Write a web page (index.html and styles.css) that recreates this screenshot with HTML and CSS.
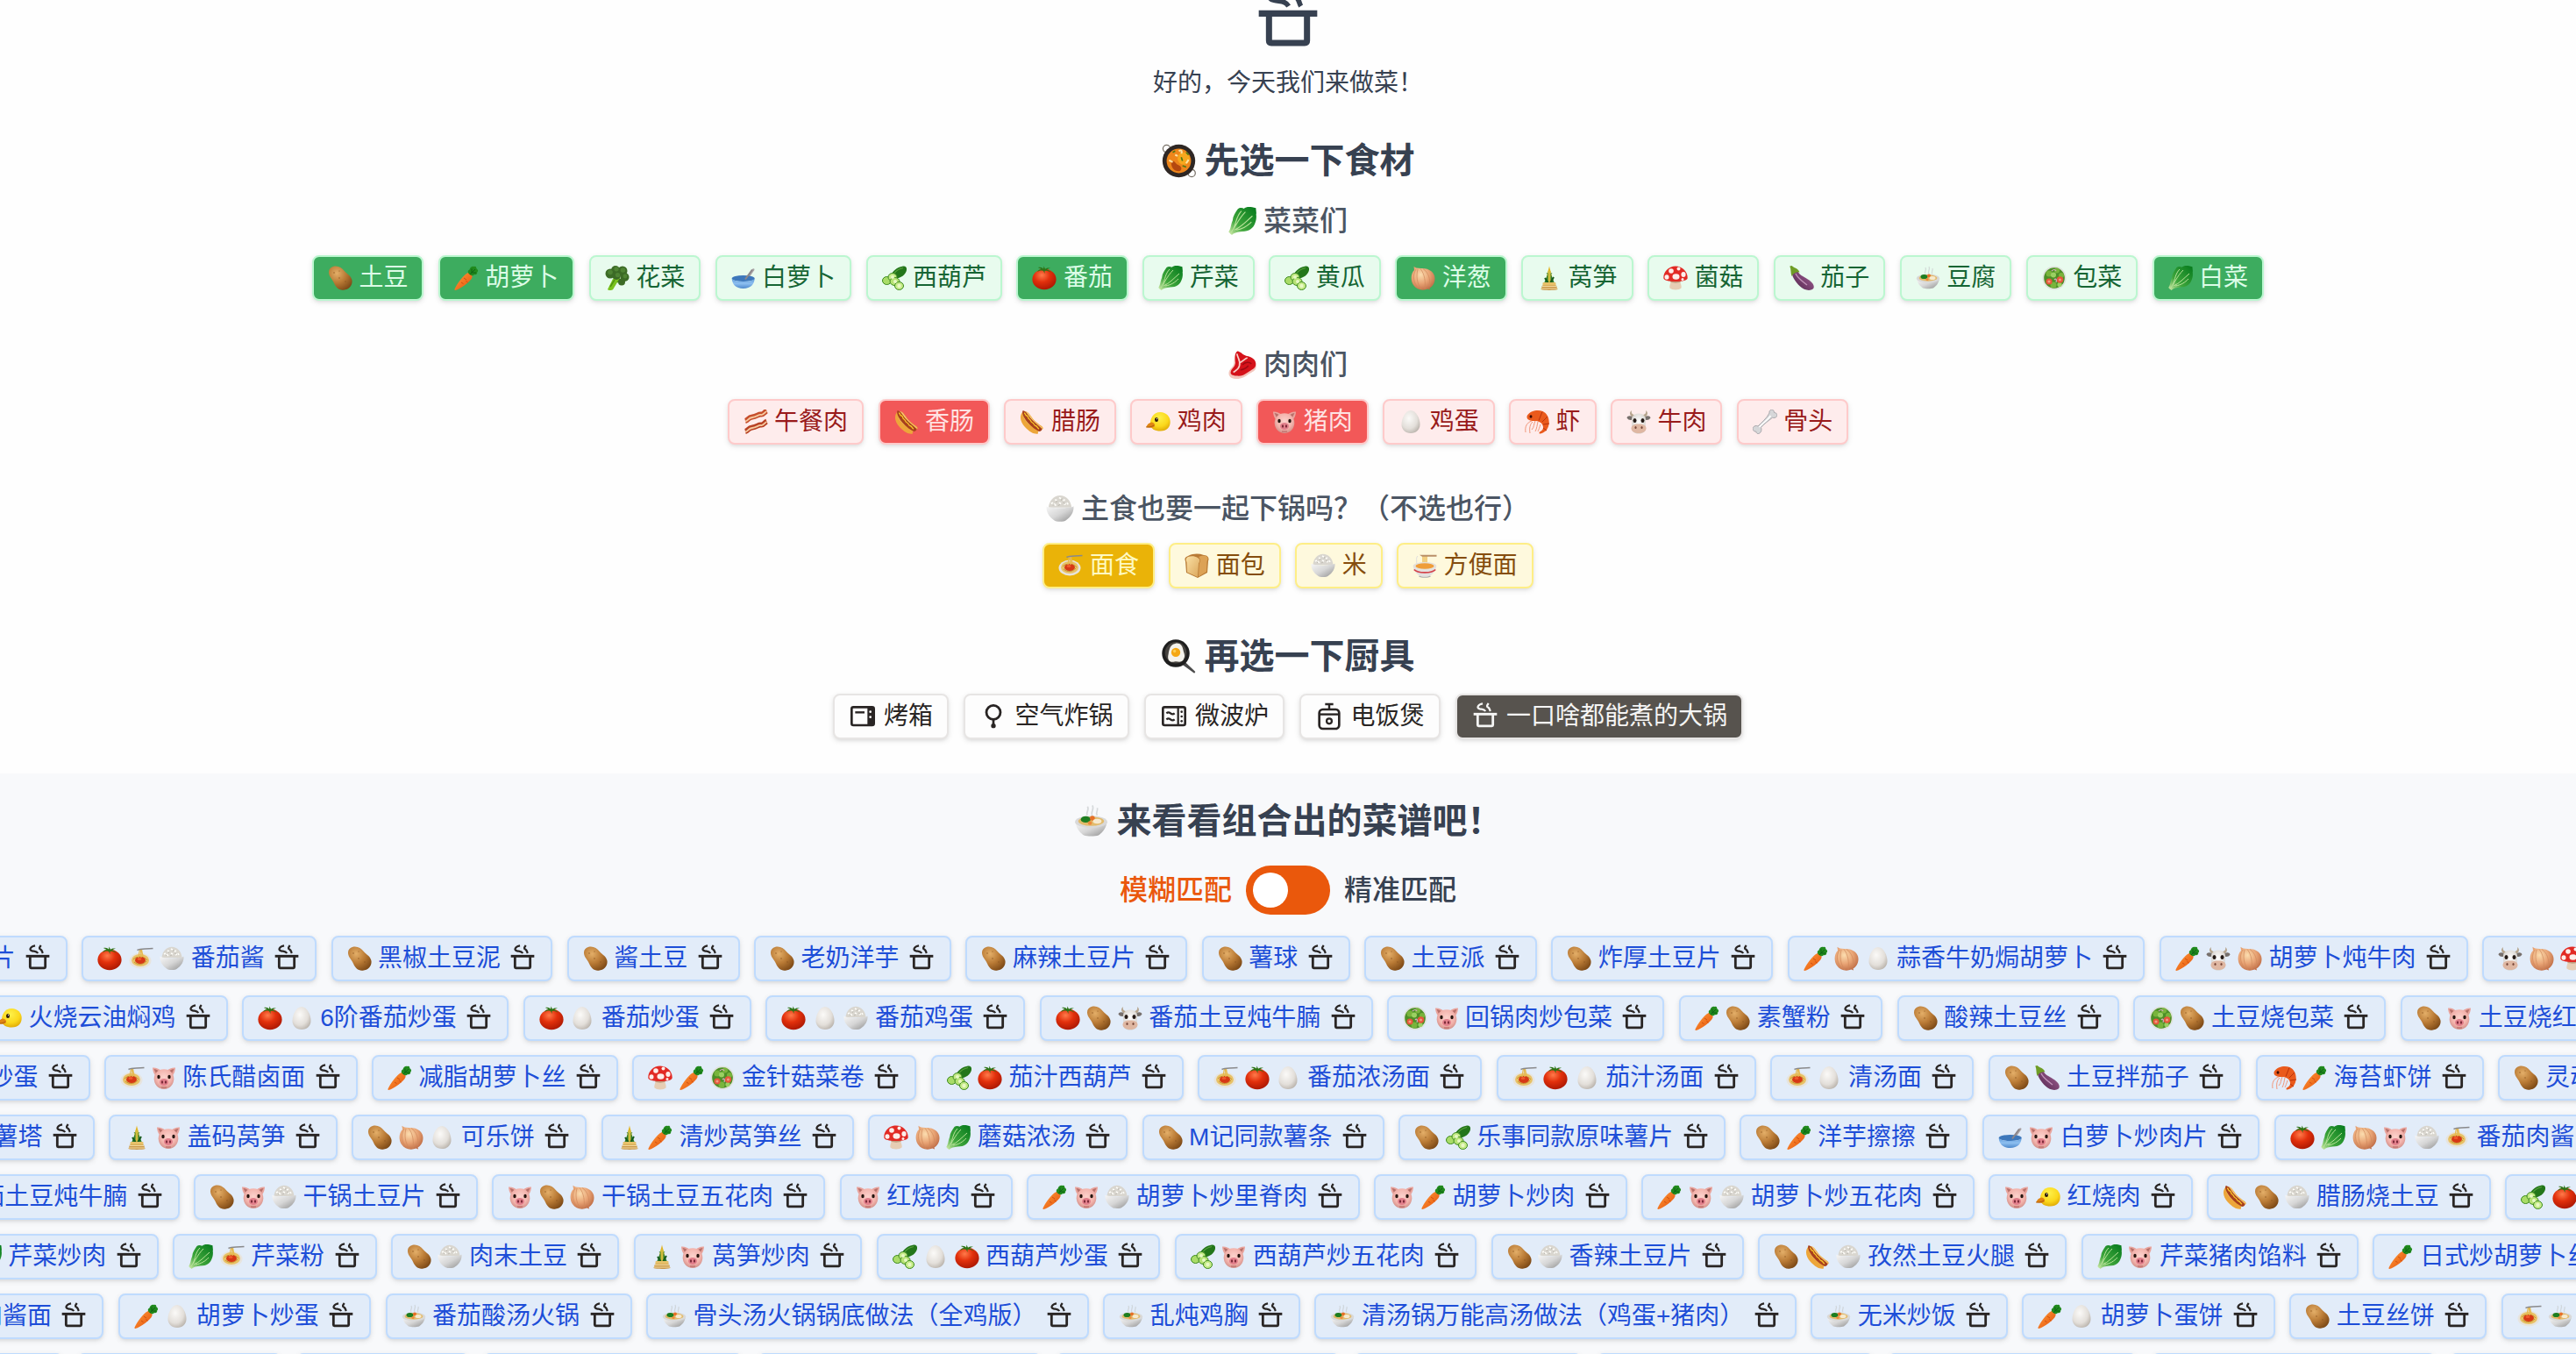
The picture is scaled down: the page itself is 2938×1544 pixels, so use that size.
FILE: index.html
```html
<!DOCTYPE html>
<html lang="zh-CN">
<head>
<meta charset="utf-8">
<title>好的，今天我们来做菜！</title>
<link rel="stylesheet" href="styles.css">
</head>
<body>
<svg class="defs" aria-hidden="true">
<defs>
<radialGradient id="gPotato" cx=".35" cy=".3" r=".8"><stop offset="0" stop-color="#e3ae68"/><stop offset=".5" stop-color="#b97a35"/><stop offset="1" stop-color="#7a4715"/></radialGradient>
<radialGradient id="gTomato" cx=".4" cy=".3" r=".75"><stop offset="0" stop-color="#ff7a4a"/><stop offset=".45" stop-color="#e2300c"/><stop offset="1" stop-color="#a81602"/></radialGradient>
<radialGradient id="gOnion" cx=".4" cy=".35" r=".75"><stop offset="0" stop-color="#fbdcae"/><stop offset=".5" stop-color="#e8a374"/><stop offset="1" stop-color="#b8643f"/></radialGradient>
<radialGradient id="gEgg" cx=".4" cy=".35" r=".75"><stop offset="0" stop-color="#fbfaf8"/><stop offset=".6" stop-color="#e3dfda"/><stop offset="1" stop-color="#b3aca4"/></radialGradient>
<radialGradient id="gPig" cx=".5" cy=".4" r=".65"><stop offset="0" stop-color="#fcd3cd"/><stop offset=".6" stop-color="#f3b3ac"/><stop offset="1" stop-color="#c98881"/></radialGradient>
<radialGradient id="gCow" cx=".5" cy=".4" r=".65"><stop offset="0" stop-color="#ffffff"/><stop offset="1" stop-color="#cfcac4"/></radialGradient>
<radialGradient id="gChick" cx=".45" cy=".3" r=".75"><stop offset="0" stop-color="#fdf04a"/><stop offset=".6" stop-color="#fbd81c"/><stop offset="1" stop-color="#dda504"/></radialGradient>
<linearGradient id="gBowl" x1="0" y1="0" x2="1" y2="1"><stop offset="0" stop-color="#f7f7f7"/><stop offset=".5" stop-color="#d6d6d6"/><stop offset="1" stop-color="#8f8f8f"/></linearGradient>
<linearGradient id="gBlue" x1="0" y1="0" x2="0" y2="1"><stop offset="0" stop-color="#5b98d8"/><stop offset=".5" stop-color="#8dbff0"/><stop offset="1" stop-color="#4c88cc"/></linearGradient>
<linearGradient id="gLeaf" x1="0" y1="1" x2="1" y2="0"><stop offset="0" stop-color="#d9efb0"/><stop offset=".35" stop-color="#3fa63c"/><stop offset="1" stop-color="#04791c"/></linearGradient>
<linearGradient id="gCarrot" x1="0" y1="0" x2="1" y2="1"><stop offset="0" stop-color="#ff9b3a"/><stop offset="1" stop-color="#e4500a"/></linearGradient>
<linearGradient id="gEgpl" x1="0" y1="1" x2="1" y2="0"><stop offset="0" stop-color="#4d2448"/><stop offset=".5" stop-color="#7d4474"/><stop offset="1" stop-color="#a9719c"/></linearGradient>
<linearGradient id="gBread" x1="0" y1="0" x2="1" y2="1"><stop offset="0" stop-color="#fae0a4"/><stop offset="1" stop-color="#dba65a"/></linearGradient>
<symbol id="potato" viewBox="0 0 28 28"><path d="M6.500 .8C1.500 1.800-.2 6.600 1.800 11.200c1.700 3.600 3.600 4.600 5.400 9.100 1.800 4.300 5.300 8 10.600 7.400 6.600-.7 10.400-5.600 9.700-11C26.900 12 22.500 9.800 18.800 5.900 15.600 2.500 12-.3 6.500.8z" fill="url(#gPotato)"/><g fill="#8d5620"><circle cx="7" cy="8" r=".7"/><circle cx="13" cy="14" r=".7"/><circle cx="20" cy="18" r=".7"/><circle cx="13" cy="6" r=".6"/></g></symbol>
<symbol id="carrot" viewBox="0 0 28 28"><path d="M15 8.500c2.600-1.500 6.400 1.500 5.400 4.900C18.700 18 7 26.500 1.300 28c-.9.100-1-.7-.7-1.400C3 20.500 11 10.500 15 8.500z" fill="url(#gCarrot)"/><path d="M11 14l3 2M8 19l2.500 1.600M15.500 19l-2-1.500" stroke="#c4440a" stroke-width=".8"/><path d="M17 9.500c-2.500-3-.5-4.500.5-5 .5-3 3.500-4.500 5-3.500 2-.5 3 .5 2.700 2 2.300 1.500 2.500 3.500 1 4.500.3 2.500-1.700 3-3.200 2.500-1.500 2-3.500 1.500-6-.5z" fill="#208a1d"/><path d="M18 10l6-6M20 8V3.500M20.500 8H25" stroke="#0d5e14" stroke-width=".9"/></symbol>
<symbol id="broccoli" viewBox="0 0 28 28"><path d="M9 15L3 27c1 1.500 5 1 6 .2L14 19l4-2-2-5z" fill="#79c21d"/><path d="M6 24l5-8M14 19l5-4" stroke="#4f9410" stroke-width="1.500"/><g fill="#3c6b26"><circle cx="6" cy="9" r="5.500"/><circle cx="12" cy="5" r="5"/><circle cx="20" cy="6" r="5.500"/><circle cx="22.500" cy="13" r="5"/><circle cx="19" cy="18.500" r="4"/><circle cx="13" cy="11" r="5"/></g><g fill="#4f8434"><circle cx="6" cy="7.500" r="2.800"/><circle cx="13" cy="3.800" r="2.600"/><circle cx="20.500" cy="5" r="2.800"/><circle cx="23" cy="12" r="2.400"/><circle cx="14.500" cy="10.500" r="2.600"/></g></symbol>
<symbol id="bowl" viewBox="0 0 28 28"><path d="M24.500 3.500c1.600-.7 2.500.6 1.700 1.700L18 17l-3-1z" fill="#aaa4a6"/><ellipse cx="13.700" cy="14.500" rx="13" ry="3.600" fill="#3d77bb"/><path d="M.7 14.500C1 21 5 26 13.700 26s12.700-5 13-11.500c-1.500 4.800-24.500 4.800-26 0z" fill="url(#gBlue)"/><path d="M24 4.500L16 15.500" stroke="#8c868a" stroke-width="2"/></symbol>
<symbol id="cucumber" viewBox="0 0 28 28"><path d="M24 .5c3-.6 4.500 1.500 4 4.500-.7 5-7 9.500-12.500 9.500-4.200 0-5.500-3-4-6C13.500 4.500 19 1.200 24 .5z" fill="#23761a"/><path d="M24 2.500c-4 1-8 3-10 6" stroke="#59a13c" stroke-width="1.200" fill="none"/><g stroke="#3c8a1f" stroke-width="1"><ellipse cx="5.500" cy="17" rx="5" ry="4.500" fill="#a9dc68"/><ellipse cx="12" cy="13" rx="5" ry="4.500" fill="#c4ea86"/><ellipse cx="14.500" cy="18" rx="5.500" ry="4.500" fill="#b6e274"/><ellipse cx="19.500" cy="23" rx="5" ry="4.500" fill="#c4ea86"/></g><g fill="#e8f8c4"><circle cx="12" cy="13" r="2"/><circle cx="15" cy="18" r="2"/><circle cx="19.500" cy="23" r="2.200"/></g></symbol>
<symbol id="tomato" viewBox="0 0 28 28"><ellipse cx="14" cy="15.500" rx="13.600" ry="11.700" fill="url(#gTomato)"/><path d="M13 6c-3-1-5 0-7 1 1-2 3-3 4.500-3C9 3 8 2.500 7 2c3-.8 5 .4 6 1.500L13.500.5 15 3.800c2-1.600 4-1.500 6-1-2 .4-3 1-4 2 2 .2 3.500 1.200 4.500 3C19 6 16 5.500 14.500 6v3z" fill="#2d7516"/></symbol>
<symbol id="leafy" viewBox="0 0 28 28"><path d="M9.500 2c2-1.800 4.500-1 6-.3C18-.5 22-.3 27.500 1.200c-.2 2 .8 4 .2 6.300.5 3 0 6-1 8.500-1.500 5-6 8.500-13 8.500C9 25 6 25.500 3.500 28L.2 25c2.500-3.500 2-7 4-11.500C4.500 9 7 5.500 9.500 2z" fill="url(#gLeaf)"/><path d="M2 26.500C7 20 10 12 17 5M5 22C8 15 8 9 13 4M6 23c7-3 11-8 18-14M8 23c7-1 11-4 15-8" stroke="#b9e39a" stroke-width="1" fill="none"/></symbol>
<symbol id="onion" viewBox="0 0 28 28"><path d="M3.500.8c1.600 1.700 4 2.200 8 2.200C21 2.500 27.500 7.500 27.500 14.500c0 5.500-2.500 9-6 11l.5 2-2.500-1c-6 2.500-13 .8-16.500-4.500-3.600-5.500-3-13 1-17z" fill="url(#gOnion)"/><path d="M6 4C1 12 4 20 8 25M8 4c-2 8-1 16 4 23M11 3.500c5 6 6 15 5 23M14 3.500c6 4 9 12 7 20" stroke="#d08a5c" stroke-width=".7" fill="none"/></symbol>
<symbol id="pine" viewBox="0 0 28 28"><path d="M11 12l3-11.500L17 12l1 9h-8z" fill="#e2b526"/><path d="M10.500 8l1.500 2-4 10h12l-4-10 1.500-2-3 1z" fill="#2b7a2a"/><path d="M12.500 6h3v13h-3z" fill="#d0bc3c"/><path d="M9 14l4 6M19 13l-4 7" stroke="#175b1e" stroke-width="2"/><rect x="6.500" y="19" width="15" height="4" rx="1" fill="#e7c069"/><path d="M6 22.500h16l1.500 4.500c-3 1.200-16 1.200-19 0z" fill="#c9974a"/><path d="M6 23.500h16M5 26h18" stroke="#f4dca0" stroke-width="1"/></symbol>
<symbol id="mushroom" viewBox="0 0 28 28"><path d="M9 14h10c-.5 5 2.500 8.500 1.500 11.500-2.500 2.500-10.500 2.500-13 0C6.500 22.500 9.500 19 9 14z" fill="#e6cdb4"/><path d="M8.500 16h11l.3 2.500c-3 1.500-8.500 1.500-11.600 0z" fill="#bd9c7e"/><path d="M14 .5C22 .5 28 7 27.700 14c0 2.800-6 4-13.700 4S.3 16.800.3 14C0 7 6 .5 14 .5z" fill="#e22a24"/><g fill="#fdeeea"><circle cx="9" cy="6" r="2.800"/><circle cx="17.500" cy="3.500" r="2"/><ellipse cx="14.500" cy="12.500" rx="4" ry="3.300"/><ellipse cx="4" cy="13" rx="2.500" ry="2.800"/><ellipse cx="23" cy="10" rx="2.600" ry="3"/><circle cx="22" cy="15.500" r="1.500"/></g></symbol>
<symbol id="eggplant" viewBox="0 0 28 28"><path d="M2.500 2C6 5 9 4.500 10.500 8c2 3.500 6.500 4.500 12 8.500 4.500 3.500 6.500 7 4.500 9.800-4 3.300-11 1.200-15-2.800C5.500 17.500 1 10 2.500 2z" fill="url(#gEgpl)"/><path d="M7 9c2 5 7 8 13 13" stroke="#c193b8" stroke-width="1.400" fill="none"/><path d="M.3.5L2.600 0c2 2.500 7 2.500 8.900 7.500-2-.5-3-.5-4 .2C6 8 4 9 2.500 12 1 8 2 4 .3.500z" fill="#6f9d26"/></symbol>
<symbol id="stew" viewBox="0 0 28 28"><path d="M11 9c-2-2 2-4 0-7M15 9c-2-2 2-5 0-8M19 9c-2-2 1-3 0-6" stroke="#c8cccd" stroke-width="1.200" fill="none" opacity=".7"/><path d="M1 14.500C2 21 6 24 8 25.500c3 1 9 1 12 0 2-1.500 6-4.500 7-11z" fill="url(#gBowl)"/><ellipse cx="14" cy="14.500" rx="13.200" ry="5" fill="#d9d9d9"/><ellipse cx="14" cy="14" rx="10.500" ry="3.700" fill="#e3bb6b"/><ellipse cx="9.500" cy="12.500" rx="4" ry="2.600" fill="#1d7e21"/><circle cx="15" cy="11.500" r="2" fill="#e66f26"/><ellipse cx="19" cy="14" rx="3.500" ry="2" fill="#f6ead0"/><circle cx="13" cy="15.500" r="1.600" fill="#ed8a3d"/></symbol>
<symbol id="salad" viewBox="0 0 28 28"><circle cx="14" cy="14" r="13.500" fill="#dfe2dc"/><circle cx="14" cy="14" r="11.800" fill="#4c8f27"/><g fill="#79b43c"><circle cx="8" cy="9" r="3.500"/><circle cx="17" cy="5.500" r="3"/><circle cx="22" cy="11" r="3"/><circle cx="13" cy="22" r="3.500"/></g><g fill="#9bd062"><circle cx="13" cy="10.500" r="3"/><circle cx="20" cy="21.500" r="2.600"/></g><g fill="#e5573b"><circle cx="8" cy="18" r="3.600"/><circle cx="20.500" cy="16" r="3.700"/></g><g fill="#f29a83"><circle cx="8" cy="18" r="1.600"/><circle cx="20.500" cy="16" r="1.600"/></g><path d="M11 6c2-2 4-2 5 0M14 16c2-2 3 0 2 3" stroke="#d7a6c4" stroke-width="1.200" fill="none"/></symbol>
<symbol id="steak" viewBox="0 0 28 28"><path d="M9 .5c3.500.5 5 3.500 8.500 4.500 6 1 10.500 4 10.300 10-.2 5.500-4 5.500-7.800 8.500-4 3-8 5-13 4.500-5-.5-7-3-6.500-6.500.8-4 4.500-5 5-9C6 8.500 6 2 9 .5z" fill="#f3c5bc"/><path d="M9 .5c3.500.5 5 3.500 8.500 4.500 6 1 10.500 4 9.800 9-.3 4-4 4.500-7.800 7.500-4 3-7 4-11.500 3.500-4-.5-6.500-1.500-5.500-4.500.8-3 4-4 4.500-8.500C6.500 8.500 6 2 9 .5z" fill="#d5121a"/><path d="M8.500 3c1 5 4 7 2.500 12-1 4-4 5-6 6.500M11 12c3-1 5-4 8-5" stroke="#f7cfc8" stroke-width="1.500" fill="none"/><path d="M14 14c3-3 7-3 9-1M12 19c3 0 6-2 8-4" stroke="#9e0a12" stroke-width="1.300" fill="none"/></symbol>
<symbol id="bacon" viewBox="0 0 28 28"><g fill="none"><path d="M2 13c4-1 3-4 8-4.500S17 5 20 5.500s4-3 6.500-4" stroke="#c64e2c" stroke-width="6"/><path d="M2 13.500c4-1 3-4 8-4.500s7-3.500 10-3 4-3 6.500-4" stroke="#f6c9a0" stroke-width="1.800"/><path d="M2 25c4-1 3-4 8-4.500s7-3.500 10-3 4-3 6.500-4" stroke="#b74225" stroke-width="6"/><path d="M2 25.500c4-1 3-4 8-4.500s7-3.500 10-3 4-3 6.500-4" stroke="#f6c9a0" stroke-width="1.800"/></g></symbol>
<symbol id="hotdog" viewBox="0 0 28 28"><path d="M3 3C-.5 8 .5 14 6 20s11 8.500 15 7.500c-1-3 3-4 5.500-5.500C28 19 20 17 15 10.500 11 5 8 0 3 3z" fill="#eda63a"/><path d="M4 3c4-2.500 6 1 9 5.500 4 6 10 9.500 13 12.500l-3 3C17 22 10 17 7 13 4.500 9.500 3 6 4 3z" fill="#f7cb72"/><path d="M3.500 1.200C6 .5 9 5 12 9.500c4 5 10 9 13.500 12.500-.3 2.300-1.800 3-3 3C17 23 11 17 8 13.500 5 9.500 2 4 3.500 1.200z" fill="#a8401c"/><path d="M5 4c2 0 1 3 3 3s1 3 3 4 1 3 3.500 4 1 3 3.500 3.500 2 3 4 3.500" stroke="#f9c82a" stroke-width="1.300" fill="none"/></symbol>
<symbol id="chick" viewBox="0 0 28 28"><path d="M16.500 3C23 3 27.800 8 27.700 14S24 24.500 16.500 24.500C10 24.500 5.500 22 5 17c-.5-6 3-14 11.500-14z" fill="url(#gChick)"/><path d="M6.500 14.500c-3 .5-5 2.500-6.300 5.500 2.800.5 7 1.500 9.300-.5 1.500-2 0-4.500-3-5z" fill="#e08512"/><path d="M.2 20c3 .2 6 0 9-2" stroke="#a8590a" stroke-width=".9" fill="none"/><ellipse cx="12" cy="11.500" rx="2" ry="2.500" fill="#2a1708"/><circle cx="12.500" cy="10.700" r=".6" fill="#fff"/></symbol>
<symbol id="pig" viewBox="0 0 28 28"><path d="M1 2.500c3-.5 7.500 1 9.500 3.500L4 11C2 9 1 5 1 2.500zM27 2.500C24 2 19.500 3.500 17.500 6l6.500 5c2-2 3-6 3-8.500z" fill="#e9a49d"/><path d="M2.500 4c2 0 4 1 5.500 2.500L5 9zM25.500 4c-2 0-4 1-5.500 2.500L23 9z" fill="#b8706a"/><path d="M14 4.300c7 0 11.300 4.700 11.300 11S20.500 27 14 27 2.700 21.600 2.700 15.300s4.300-11 11.300-11z" fill="url(#gPig)"/><ellipse cx="14" cy="19" rx="5" ry="4" fill="#e27f8b"/><ellipse cx="12" cy="19" rx="1.100" ry="1.700" fill="#7c2b38"/><ellipse cx="16" cy="19" rx="1.100" ry="1.700" fill="#7c2b38"/><ellipse cx="8" cy="13" rx="1.700" ry="2.200" fill="#25150f"/><ellipse cx="20" cy="13" rx="1.700" ry="2.200" fill="#25150f"/><path d="M11 25h6" stroke="#b4615f" stroke-width="1"/></symbol>
<symbol id="egg" viewBox="0 0 28 28"><path d="M14 1c6 0 10.500 9 10.500 16 0 6-4.500 10-10.500 10S3.500 23 3.500 17C3.500 10 8 1 14 1z" fill="url(#gEgg)"/></symbol>
<symbol id="shrimp" viewBox="0 0 28 28"><path d="M3 6.500C7 1 15 0 20.500 2 26 4.500 28.500 11 27.500 17s-5 9.500-9.500 10.500c-2 .3-2-1.800 0-2.500 3-1.500 4-5 2-8-2-3.500-6-4-10-4-5 0-9-2.500-7-6.500z" fill="#ea5a1c"/><path d="M20 2.500l-4 10M26 8l-6 6M28 16l-7 1M25 24l-4-3" stroke="#b8320b" stroke-width="1" fill="none"/><ellipse cx="7" cy="8" rx="1.500" ry="1.700" fill="#3b0c04"/><path d="M8 13C2 15 0 20 1 26M9 14c-3 3-4 7-3 13M12 13c-2 4-1 7-4 10M15 14c-1 4-1 7-3 11M18 17c-1 3-2 6-3 8" stroke="#f19679" stroke-width="1" fill="none"/></symbol>
<symbol id="cow" viewBox="0 0 28 28"><path d="M6 1C5 4 7 6 10 6l-2 3C4 8 2.500 3 6 1zM22 1c1 3-1 5-4 5l2 3c4-1 5.500-6 2-8z" fill="#b6a58e"/><path d="M6.500 8C4 6.500 1 7 .5 9.500 2 12 5 12.500 7 11.500zM21.500 8c2.500-1.500 5.500-1 6 1.500-1.500 2.500-4.500 3-6.500 2z" fill="#77706c"/><path d="M14 4.500c6 0 8.500 4 8 9-.5 4 0 6 0 8 0 4-4 6-8 6s-8-2-8-6c0-2 .5-4 0-8-.5-5 2-9 8-9z" fill="url(#gCow)"/><path d="M14 16.500c5.500 0 8.500 2 8.500 5s-3.500 5.500-8.500 5.500-8.500-2.500-8.500-5.500 3-5 8.500-5z" fill="#dfb7a2"/><ellipse cx="9.500" cy="12.500" rx="2" ry="2.500" fill="#241a16"/><ellipse cx="18.500" cy="12.500" rx="2" ry="2.500" fill="#241a16"/><ellipse cx="10.500" cy="20.500" rx="1.100" ry="1.500" fill="#7b4a3c"/><ellipse cx="17.500" cy="20.500" rx="1.100" ry="1.500" fill="#7b4a3c"/></symbol>
<symbol id="bone" viewBox="0 0 28 28"><path d="M19 4c-.5-3 2-4.500 4-3.500 1.500.8 1.500 2.500 1.500 3 2.500 0 4 2 3 4.200-1 2-3.500 2-5 1.500C18 13 12 17 9.500 20.500c.5 1.500 1 4-1 6C6.500 28.500 4 27.500 3.800 25c-2.500.5-4.300-2-3.300-4.500 1-2 3.500-2.500 5.500-1.500C10 15 16 10 19 4z" fill="#d6d7d9" stroke="#9a9b9f" stroke-width=".8"/><path d="M20.500 7C17 12 11 16 7.500 20" stroke="#fff" stroke-width="1.500" fill="none"/></symbol>
<symbol id="rice" viewBox="0 0 28 28"><path d="M2.500 13C3 6 8 .8 14 .8S25 6 25.500 13z" fill="#d9d6cf"/><path d="M5 9l2-1M9 5l2 1M13 3l2 1M17 6l2-1M21 8l1 2M8 9l2 2M13 8l2 1M18 10l2-1" stroke="#fffefa" stroke-width="1.500"/><path d="M10 8l1-2M15 6l1-2M19 9l-2-1M7 11l1-1M12 11l2-1" stroke="#b8b4ab" stroke-width=".8"/><path d="M.5 11.500c2 2.500 25 2.500 27 0 .5 6-3 11-7.500 14-2 2-10 2-12 0-4.500-3-8-8-7.500-14z" fill="url(#gBowl)"/></symbol>
<symbol id="pasta" viewBox="0 0 28 28"><ellipse cx="13" cy="16.500" rx="12.500" ry="9" fill="#e7e4de"/><ellipse cx="13" cy="16" rx="10" ry="7" fill="#e8c267"/><path d="M5 15c4-4 12-4 16 1M6 18c5 4 10 3 14-1M8 13c3 0 6-1 9 1" stroke="#c18e2c" stroke-width=".9" fill="none"/><ellipse cx="13" cy="16" rx="6" ry="4" fill="#d63815"/><ellipse cx="12" cy="14.500" rx="2.500" ry="1.500" fill="#f05a2c"/><path d="M11 13L12.500 3M14 13L13.500 3M16 12L14.500 4" stroke="#e5b94e" stroke-width="1.300"/><path d="M9.500 4.500c4-2 8-1 18-2" stroke="#89898b" stroke-width="1.500" fill="none"/></symbol>
<symbol id="bread" viewBox="0 0 28 28"><path d="M4 3c6-3 12-3 18-1 6 .5 6 4.500 5 7l-1 13-11 6L2 22 1 9C-.5 6 1 4 4 3z" fill="#b87a35"/><path d="M4 4c3-1 8-1 11 1 3 1.500 2.500 4.500 1 6.500L15 27 3 21.500 2.500 10C1 7 2 5 4 4z" fill="url(#gBread)"/><path d="M16 4c4-1.500 10-2 10.500 1.500 0 2-1 3-1 4.500L25 21l-9 5.500.7-14.500C18.500 9 18 5.500 16 4z" fill="#dca255"/></symbol>
<symbol id="ramen" viewBox="0 0 28 28"><path d="M12 13V2.500M14 13V2M16 13V2" stroke="#edbd58" stroke-width="1.400"/><path d="M8 1.800h19.500v2H11z" fill="#b98f68"/><path d="M6 3c-3 3 0 6-2 10" stroke="#ddd" stroke-width="1" fill="none"/><ellipse cx="14" cy="14.500" rx="13.300" ry="4.600" fill="#e5e0d9"/><ellipse cx="14" cy="14.500" rx="10.500" ry="3.200" fill="#ef9d38"/><path d="M.8 15c1 5.500 4 8.500 7.200 10.500 2.500 1.800 9.500 1.800 12 0C23.200 23.500 26.200 20.500 27.200 15c-3 5.500-23.400 5.500-26.400 0z" fill="#e3e1e0"/><path d="M1.800 18.500c4 4.500 20.400 4.500 24.400 0" stroke="#d4434a" stroke-width="1.800" fill="none"/><path d="M8 25.500c2.500 1.800 9.500 1.800 12 0l1 .8c-3 2-11 2-14 0z" fill="#aaa"/></symbol>
<symbol id="paella" viewBox="0 0 28 28"><circle cx="4" cy="4" r="3" fill="none" stroke="#777067" stroke-width=".9"/><circle cx="24.500" cy="24" r="3" fill="none" stroke="#777067" stroke-width=".9"/><circle cx="14" cy="14" r="13.400" fill="#2e2724"/><circle cx="14" cy="14" r="10" fill="#ee861b"/><circle cx="18" cy="12" r="5" fill="#f7a81e"/><path d="M8 14c-1 5 2 8.500 6 8.500 2.500-.5 3-3.500 0-5-3-1-3-4-6-3.500z" fill="#b4480f"/><path d="M6 13.500l3 1.500M14 6c2-1.500 3 0 2 2M20 16l2-3M11 9l2 1" stroke="#fbe4a6" stroke-width="1.500" fill="none"/><path d="M16 11l1 3M20 7l2 2M11 6l-2 1M17 18l3 1" stroke="#4b7a14" stroke-width="1.200"/></symbol>
<symbol id="frypan" viewBox="0 0 28 28"><path d="M19 18.500l8.500 8-.8 1.300-9.700-7z" fill="#4a4a4a"/><circle cx="11.500" cy="11.500" r="11.300" fill="#1e1e1e"/><circle cx="11.500" cy="11" r="8.800" fill="#46433f"/><path d="M11 3.500c4-1 6 2 6.500 5 .5 3 2.500 5 0 8.500-3 3-5 0-8 1.500-4 .5-5-3-4-6.500C6 8.500 7 4 11 3.500z" fill="#f4f2ec"/><circle cx="11.500" cy="10.700" r="3.700" fill="#f5a713"/><circle cx="10.500" cy="9.700" r="1.200" fill="#fccf56"/></symbol>
<symbol id="pot" viewBox="0 0 24 24"><path d="M2 10h20" stroke="currentColor" stroke-width="2.200"/><path d="M5.500 10v9.300q0 .8.8.8h11.400q.8 0 .8-.8V10" fill="none" stroke="currentColor" stroke-width="2.100"/><path d="M9.800 1C6 1.600 4 4.800 7.200 5.500 9.500 6 11 5.600 12.200 7.500M14.800.8C13.300 2.700 13 3.500 14.400 4.200 15.900 4.900 15.600 6.200 16.400 7.500" fill="none" stroke="currentColor" stroke-width="1.700"/></symbol>
<symbol id="oven" viewBox="0 0 24 24"><rect x="2.500" y="4" width="19" height="15.500" rx="1.500" fill="none" stroke="currentColor" stroke-width="2"/><path d="M16 4h5v16h-5z" fill="currentColor"/><path d="M5.500 8.500h8" stroke="currentColor" stroke-width="1.800"/><circle cx="18.500" cy="8" r="1" fill="#fdfdfd"/><circle cx="18.500" cy="12.500" r="1" fill="#fdfdfd"/></symbol>
<symbol id="fryer" viewBox="0 0 24 24"><circle cx="12" cy="8.500" r="6" fill="none" stroke="currentColor" stroke-width="2.100"/><path d="M12 14.500V20" stroke="currentColor" stroke-width="2"/><circle cx="12" cy="20" r="2" fill="currentColor"/></symbol>
<symbol id="micro" viewBox="0 0 24 24"><rect x="2.500" y="4" width="19" height="15.500" rx="1.500" fill="none" stroke="currentColor" stroke-width="2"/><path d="M15.500 4v16" stroke="currentColor" stroke-width="1.700"/><path d="M5.500 9.300q1.700-1.500 3.500 0t3.500 0M5.500 14.500q1.700-1.500 3.500 0t3.500 0" fill="none" stroke="currentColor" stroke-width="1.700"/><circle cx="18.500" cy="8" r="1" fill="currentColor"/><circle cx="18.500" cy="12" r="1" fill="currentColor"/><circle cx="18.500" cy="16" r="1" fill="currentColor"/></symbol>
<symbol id="cooker" viewBox="0 0 24 24"><path d="M8.500 1.500h7M12 1.500V5.500" stroke="currentColor" stroke-width="1.800"/><rect x="3.500" y="6" width="17" height="16.500" rx="3" fill="none" stroke="currentColor" stroke-width="2"/><path d="M3.500 10.200h17" stroke="currentColor" stroke-width="1.800"/><circle cx="12" cy="16" r="2.200" fill="none" stroke="currentColor" stroke-width="1.700"/></symbol>
</defs>
</svg>

<main class="picker">
  <svg class="logo"><use href="#pot"/></svg>
  <p class="tagline">好的，今天我们来做菜！</p>

  <h2 class="title first"><svg><use href="#paella"/></svg>先选一下食材</h2>

  <h3 class="group top"><svg><use href="#leafy"/></svg>菜菜们</h3>
  <div class="chips green">
    <button class="chip on"><svg><use href="#potato"/></svg>土豆</button>
    <button class="chip on"><svg><use href="#carrot"/></svg>胡萝卜</button>
    <button class="chip"><svg><use href="#broccoli"/></svg>花菜</button>
    <button class="chip"><svg><use href="#bowl"/></svg>白萝卜</button>
    <button class="chip"><svg><use href="#cucumber"/></svg>西葫芦</button>
    <button class="chip on"><svg><use href="#tomato"/></svg>番茄</button>
    <button class="chip"><svg><use href="#leafy"/></svg>芹菜</button>
    <button class="chip"><svg><use href="#cucumber"/></svg>黄瓜</button>
    <button class="chip on"><svg><use href="#onion"/></svg>洋葱</button>
    <button class="chip"><svg><use href="#pine"/></svg>莴笋</button>
    <button class="chip"><svg><use href="#mushroom"/></svg>菌菇</button>
    <button class="chip"><svg><use href="#eggplant"/></svg>茄子</button>
    <button class="chip"><svg><use href="#stew"/></svg>豆腐</button>
    <button class="chip"><svg><use href="#salad"/></svg>包菜</button>
    <button class="chip on"><svg><use href="#leafy"/></svg>白菜</button>
  </div>

  <h3 class="group"><svg><use href="#steak"/></svg>肉肉们</h3>
  <div class="chips red">
    <button class="chip"><svg><use href="#bacon"/></svg>午餐肉</button>
    <button class="chip on"><svg><use href="#hotdog"/></svg>香肠</button>
    <button class="chip"><svg><use href="#hotdog"/></svg>腊肠</button>
    <button class="chip"><svg><use href="#chick"/></svg>鸡肉</button>
    <button class="chip on"><svg><use href="#pig"/></svg>猪肉</button>
    <button class="chip"><svg><use href="#egg"/></svg>鸡蛋</button>
    <button class="chip"><svg><use href="#shrimp"/></svg>虾</button>
    <button class="chip"><svg><use href="#cow"/></svg>牛肉</button>
    <button class="chip"><svg><use href="#bone"/></svg>骨头</button>
  </div>

  <h3 class="group"><svg><use href="#rice"/></svg>主食也要一起下锅吗？（不选也行）</h3>
  <div class="chips yellow">
    <button class="chip on"><svg><use href="#pasta"/></svg>面食</button>
    <button class="chip"><svg><use href="#bread"/></svg>面包</button>
    <button class="chip"><svg><use href="#rice"/></svg>米</button>
    <button class="chip"><svg><use href="#ramen"/></svg>方便面</button>
  </div>

  <h2 class="title tools"><svg><use href="#frypan"/></svg>再选一下厨具</h2>
  <div class="chips stone">
    <button class="chip"><svg><use href="#oven"/></svg>烤箱</button>
    <button class="chip"><svg><use href="#fryer"/></svg>空气炸锅</button>
    <button class="chip"><svg><use href="#micro"/></svg>微波炉</button>
    <button class="chip"><svg><use href="#cooker"/></svg>电饭煲</button>
    <button class="chip on"><svg><use href="#pot"/></svg>一口啥都能煮的大锅</button>
  </div>
</main>

<section class="recipes">
  <h2 class="title"><svg><use href="#stew"/></svg>来看看组合出的菜谱吧！</h2>
  <div class="mode">
    <span class="active">模糊匹配</span>
    <button class="switch"><i></i></button>
    <span>精准匹配</span>
  </div>

  <div class="marquee">
    <div class="row" style="margin-left:-84.6px">
      <a class="chip">土豆片<svg class="tool"><use href="#pot"/></svg></a>
      <a class="chip"><svg><use href="#tomato"/></svg><svg><use href="#pasta"/></svg><svg><use href="#rice"/></svg>番茄酱<svg class="tool"><use href="#pot"/></svg></a>
      <a class="chip"><svg><use href="#potato"/></svg>黑椒土豆泥<svg class="tool"><use href="#pot"/></svg></a>
      <a class="chip"><svg><use href="#potato"/></svg>酱土豆<svg class="tool"><use href="#pot"/></svg></a>
      <a class="chip"><svg><use href="#potato"/></svg>老奶洋芋<svg class="tool"><use href="#pot"/></svg></a>
      <a class="chip"><svg><use href="#potato"/></svg>麻辣土豆片<svg class="tool"><use href="#pot"/></svg></a>
      <a class="chip"><svg><use href="#potato"/></svg>薯球<svg class="tool"><use href="#pot"/></svg></a>
      <a class="chip"><svg><use href="#potato"/></svg>土豆派<svg class="tool"><use href="#pot"/></svg></a>
      <a class="chip"><svg><use href="#potato"/></svg>炸厚土豆片<svg class="tool"><use href="#pot"/></svg></a>
      <a class="chip"><svg><use href="#carrot"/></svg><svg><use href="#onion"/></svg><svg><use href="#egg"/></svg>蒜香牛奶焗胡萝卜<svg class="tool"><use href="#pot"/></svg></a>
      <a class="chip"><svg><use href="#carrot"/></svg><svg><use href="#cow"/></svg><svg><use href="#onion"/></svg>胡萝卜炖牛肉<svg class="tool"><use href="#pot"/></svg></a>
      <a class="chip"><svg><use href="#cow"/></svg><svg><use href="#onion"/></svg><svg><use href="#mushroom"/></svg></a>
    </div>
    <div class="row" style="margin-left:-21px">
      <a class="chip"><svg><use href="#chick"/></svg>火烧云油焖鸡<svg class="tool"><use href="#pot"/></svg></a>
      <a class="chip"><svg><use href="#tomato"/></svg><svg><use href="#egg"/></svg>6阶番茄炒蛋<svg class="tool"><use href="#pot"/></svg></a>
      <a class="chip"><svg><use href="#tomato"/></svg><svg><use href="#egg"/></svg>番茄炒蛋<svg class="tool"><use href="#pot"/></svg></a>
      <a class="chip"><svg><use href="#tomato"/></svg><svg><use href="#egg"/></svg><svg><use href="#rice"/></svg>番茄鸡蛋<svg class="tool"><use href="#pot"/></svg></a>
      <a class="chip"><svg><use href="#tomato"/></svg><svg><use href="#potato"/></svg><svg><use href="#cow"/></svg>番茄土豆炖牛腩<svg class="tool"><use href="#pot"/></svg></a>
      <a class="chip"><svg><use href="#salad"/></svg><svg><use href="#pig"/></svg>回锅肉炒包菜<svg class="tool"><use href="#pot"/></svg></a>
      <a class="chip"><svg><use href="#carrot"/></svg><svg><use href="#potato"/></svg>素蟹粉<svg class="tool"><use href="#pot"/></svg></a>
      <a class="chip"><svg><use href="#potato"/></svg>酸辣土豆丝<svg class="tool"><use href="#pot"/></svg></a>
      <a class="chip"><svg><use href="#salad"/></svg><svg><use href="#potato"/></svg>土豆烧包菜<svg class="tool"><use href="#pot"/></svg></a>
      <a class="chip"><svg><use href="#potato"/></svg><svg><use href="#pig"/></svg>土豆烧红</a>
    </div>
    <div class="row" style="margin-left:-30.6px">
      <a class="chip">炒蛋<svg class="tool"><use href="#pot"/></svg></a>
      <a class="chip"><svg><use href="#pasta"/></svg><svg><use href="#pig"/></svg>陈氏醋卤面<svg class="tool"><use href="#pot"/></svg></a>
      <a class="chip"><svg><use href="#carrot"/></svg>减脂胡萝卜丝<svg class="tool"><use href="#pot"/></svg></a>
      <a class="chip"><svg><use href="#mushroom"/></svg><svg><use href="#carrot"/></svg><svg><use href="#salad"/></svg>金针菇菜卷<svg class="tool"><use href="#pot"/></svg></a>
      <a class="chip"><svg><use href="#cucumber"/></svg><svg><use href="#tomato"/></svg>茄汁西葫芦<svg class="tool"><use href="#pot"/></svg></a>
      <a class="chip"><svg><use href="#pasta"/></svg><svg><use href="#tomato"/></svg><svg><use href="#egg"/></svg>番茄浓汤面<svg class="tool"><use href="#pot"/></svg></a>
      <a class="chip"><svg><use href="#pasta"/></svg><svg><use href="#tomato"/></svg><svg><use href="#egg"/></svg>茄汁汤面<svg class="tool"><use href="#pot"/></svg></a>
      <a class="chip"><svg><use href="#pasta"/></svg><svg><use href="#egg"/></svg>清汤面<svg class="tool"><use href="#pot"/></svg></a>
      <a class="chip"><svg><use href="#potato"/></svg><svg><use href="#eggplant"/></svg>土豆拌茄子<svg class="tool"><use href="#pot"/></svg></a>
      <a class="chip"><svg><use href="#shrimp"/></svg><svg><use href="#carrot"/></svg>海苔虾饼<svg class="tool"><use href="#pot"/></svg></a>
      <a class="chip"><svg><use href="#potato"/></svg>灵动</a>
    </div>
    <div class="row" style="margin-left:-25.4px">
      <a class="chip">薯塔<svg class="tool"><use href="#pot"/></svg></a>
      <a class="chip"><svg><use href="#pine"/></svg><svg><use href="#pig"/></svg>盖码莴笋<svg class="tool"><use href="#pot"/></svg></a>
      <a class="chip"><svg><use href="#potato"/></svg><svg><use href="#onion"/></svg><svg><use href="#egg"/></svg>可乐饼<svg class="tool"><use href="#pot"/></svg></a>
      <a class="chip"><svg><use href="#pine"/></svg><svg><use href="#carrot"/></svg>清炒莴笋丝<svg class="tool"><use href="#pot"/></svg></a>
      <a class="chip"><svg><use href="#mushroom"/></svg><svg><use href="#onion"/></svg><svg><use href="#leafy"/></svg>蘑菇浓汤<svg class="tool"><use href="#pot"/></svg></a>
      <a class="chip"><svg><use href="#potato"/></svg>M记同款薯条<svg class="tool"><use href="#pot"/></svg></a>
      <a class="chip"><svg><use href="#potato"/></svg><svg><use href="#cucumber"/></svg>乐事同款原味薯片<svg class="tool"><use href="#pot"/></svg></a>
      <a class="chip"><svg><use href="#potato"/></svg><svg><use href="#carrot"/></svg>洋芋擦擦<svg class="tool"><use href="#pot"/></svg></a>
      <a class="chip"><svg><use href="#bowl"/></svg><svg><use href="#pig"/></svg>白萝卜炒肉片<svg class="tool"><use href="#pot"/></svg></a>
      <a class="chip"><svg><use href="#tomato"/></svg><svg><use href="#leafy"/></svg><svg><use href="#onion"/></svg><svg><use href="#pig"/></svg><svg><use href="#rice"/></svg><svg><use href="#pasta"/></svg>番茄肉酱</a>
    </div>
    <div class="row" style="margin-left:-68.7px">
      <a class="chip">番茄土豆炖牛腩<svg class="tool"><use href="#pot"/></svg></a>
      <a class="chip"><svg><use href="#potato"/></svg><svg><use href="#pig"/></svg><svg><use href="#rice"/></svg>干锅土豆片<svg class="tool"><use href="#pot"/></svg></a>
      <a class="chip"><svg><use href="#pig"/></svg><svg><use href="#potato"/></svg><svg><use href="#onion"/></svg>干锅土豆五花肉<svg class="tool"><use href="#pot"/></svg></a>
      <a class="chip"><svg><use href="#pig"/></svg>红烧肉<svg class="tool"><use href="#pot"/></svg></a>
      <a class="chip"><svg><use href="#carrot"/></svg><svg><use href="#pig"/></svg><svg><use href="#rice"/></svg>胡萝卜炒里脊肉<svg class="tool"><use href="#pot"/></svg></a>
      <a class="chip"><svg><use href="#pig"/></svg><svg><use href="#carrot"/></svg>胡萝卜炒肉<svg class="tool"><use href="#pot"/></svg></a>
      <a class="chip"><svg><use href="#carrot"/></svg><svg><use href="#pig"/></svg><svg><use href="#rice"/></svg>胡萝卜炒五花肉<svg class="tool"><use href="#pot"/></svg></a>
      <a class="chip"><svg><use href="#pig"/></svg><svg><use href="#chick"/></svg>红烧肉<svg class="tool"><use href="#pot"/></svg></a>
      <a class="chip"><svg><use href="#hotdog"/></svg><svg><use href="#potato"/></svg><svg><use href="#rice"/></svg>腊肠烧土豆<svg class="tool"><use href="#pot"/></svg></a>
      <a class="chip"><svg><use href="#cucumber"/></svg><svg><use href="#tomato"/></svg><svg><use href="#egg"/></svg></a>
    </div>
    <div class="row" style="margin-left:-44.2px">
      <a class="chip"><svg><use href="#leafy"/></svg>芹菜炒肉<svg class="tool"><use href="#pot"/></svg></a>
      <a class="chip"><svg><use href="#leafy"/></svg><svg><use href="#pasta"/></svg>芹菜粉<svg class="tool"><use href="#pot"/></svg></a>
      <a class="chip"><svg><use href="#potato"/></svg><svg><use href="#rice"/></svg>肉末土豆<svg class="tool"><use href="#pot"/></svg></a>
      <a class="chip"><svg><use href="#pine"/></svg><svg><use href="#pig"/></svg>莴笋炒肉<svg class="tool"><use href="#pot"/></svg></a>
      <a class="chip"><svg><use href="#cucumber"/></svg><svg><use href="#egg"/></svg><svg><use href="#tomato"/></svg>西葫芦炒蛋<svg class="tool"><use href="#pot"/></svg></a>
      <a class="chip"><svg><use href="#cucumber"/></svg><svg><use href="#pig"/></svg>西葫芦炒五花肉<svg class="tool"><use href="#pot"/></svg></a>
      <a class="chip"><svg><use href="#potato"/></svg><svg><use href="#rice"/></svg>香辣土豆片<svg class="tool"><use href="#pot"/></svg></a>
      <a class="chip"><svg><use href="#potato"/></svg><svg><use href="#hotdog"/></svg><svg><use href="#rice"/></svg>孜然土豆火腿<svg class="tool"><use href="#pot"/></svg></a>
      <a class="chip"><svg><use href="#leafy"/></svg><svg><use href="#pig"/></svg>芹菜猪肉馅料<svg class="tool"><use href="#pot"/></svg></a>
      <a class="chip"><svg><use href="#carrot"/></svg>日式炒胡萝卜丝</a>
    </div>
    <div class="row" style="margin-left:-43px">
      <a class="chip">肉酱面<svg class="tool"><use href="#pot"/></svg></a>
      <a class="chip"><svg><use href="#carrot"/></svg><svg><use href="#egg"/></svg>胡萝卜炒蛋<svg class="tool"><use href="#pot"/></svg></a>
      <a class="chip"><svg><use href="#stew"/></svg>番茄酸汤火锅<svg class="tool"><use href="#pot"/></svg></a>
      <a class="chip"><svg><use href="#stew"/></svg>骨头汤火锅锅底做法（全鸡版）<svg class="tool"><use href="#pot"/></svg></a>
      <a class="chip"><svg><use href="#stew"/></svg>乱炖鸡胸<svg class="tool"><use href="#pot"/></svg></a>
      <a class="chip"><svg><use href="#stew"/></svg>清汤锅万能高汤做法（鸡蛋+猪肉）<svg class="tool"><use href="#pot"/></svg></a>
      <a class="chip"><svg><use href="#stew"/></svg>无米炒饭<svg class="tool"><use href="#pot"/></svg></a>
      <a class="chip"><svg><use href="#carrot"/></svg><svg><use href="#egg"/></svg>胡萝卜蛋饼<svg class="tool"><use href="#pot"/></svg></a>
      <a class="chip"><svg><use href="#potato"/></svg>土豆丝饼<svg class="tool"><use href="#pot"/></svg></a>
      <a class="chip"><svg><use href="#pasta"/></svg><svg><use href="#stew"/></svg><svg><use href="#stew"/></svg></a>
    </div>
    <div class="row" style="margin-left:-60px">
      <a class="chip" style="width:132px"></a>
      <a class="chip" style="width:233px"></a>
      <a class="chip" style="width:197px"></a>
      <a class="chip" style="width:296px"></a>
      <a class="chip" style="width:324px"></a>
      <a class="chip" style="width:324px"></a>
      <a class="chip" style="width:260px"></a>
      <a class="chip" style="width:316px"></a>
      <a class="chip" style="width:284px"></a>
      <a class="chip" style="width:324px"></a>
      <a class="chip" style="width:324px"></a>
    </div>
  </div>
</section>
</body>
</html>
```
FILE: styles.css
```css
* {
  box-sizing: border-box;
}

html,
body {
  margin: 0;
  height: 1544px;
  overflow: hidden;
}

body {
  background: #fefefe;
  color: #374151;
  font-family: "Liberation Sans", "Noto Sans CJK SC", sans-serif;
  text-spacing-trim: space-all;
}

.defs {
  position: absolute;
  width: 0;
  height: 0;
}

.picker {
  display: flex;
  flex-direction: column;
  align-items: center;
  height: 882px;
}

.logo {
  width: 80px;
  height: 80px;
  margin-top: -18px;
  flex: none;
}

.tagline {
  margin: 13px 0 0;
  font-size: 28px;
  line-height: 40px;
}

.title,
.group {
  display: flex;
  align-items: center;
  justify-content: center;
  margin: 0;
  white-space: nowrap;
}

.title {
  font-size: 40px;
  line-height: 56px;
  font-weight: 600;
}

.title svg {
  width: 39px;
  height: 39px;
  margin-right: 10px;
}

.title.first {
  margin-top: 40px;
}

.title.tools {
  margin-top: 49px;
}

.group {
  margin-top: 49px;
  font-size: 32px;
  line-height: 48px;
  font-weight: 500;
  color: #4b5563;
}

.group.top {
  margin-top: 17px;
}

.group svg {
  width: 32px;
  height: 32px;
  margin-right: 8px;
}

.chips {
  display: flex;
  gap: 16.4px;
  margin-top: 15px;
}

.chip {
  display: flex;
  flex: none;
  align-items: center;
  height: 52px;
  margin: 0;
  padding: 0 16px;
  border: 2px solid;
  border-radius: 8px;
  box-shadow: 0 2px 6px rgba(0, 0, 0, .1), 0 2px 4px -2px rgba(0, 0, 0, .1);
  font: 28px/40px "Liberation Sans", "Noto Sans CJK SC", sans-serif;
  white-space: nowrap;
}

.chip svg {
  width: 28px;
  height: 28px;
  margin-right: 7.5px;
  flex: none;
}

.green .chip {
  background: #e8fbee;
  border-color: #bbf7d0;
  color: #166534;
}

.green .on {
  background: #3dac5f;
  color: #dcfce7;
}

.red .chip {
  background: #feecec;
  border-color: #fecaca;
  color: #991b1b;
}

.red .on {
  background: #f25858;
  color: #fee2e2;
}

.yellow .chip {
  background: #fef9dd;
  border-color: #feee86;
  color: #854d0e;
}

.yellow .on {
  background: #eab308;
  color: #fef9c3;
}

.stone {
  gap: 17.3px;
}

.stone .chip {
  background: #fdfdfd;
  border-color: #e7e5e4;
  color: #292524;
}

.stone .on {
  background: #57534e;
  color: #f5f5f4;
}

.stone .chip svg {
  width: 32px;
  height: 32px;
  margin-right: 8.2px;
}

.recipes {
  height: 662px;
  padding-top: 26px;
  overflow: hidden;
  background: #f8f9fb;
}

.mode {
  display: flex;
  align-items: center;
  justify-content: center;
  gap: 16px;
  margin-top: 23px;
  font-size: 32px;
  line-height: 48px;
  font-weight: 500;
}

.mode .active {
  color: #ea580c;
}

.switch {
  display: flex;
  align-items: center;
  width: 96px;
  height: 56px;
  padding: 0 8px;
  border: 0;
  border-radius: 28px;
  background: #ea580c;
}

.switch i {
  width: 40px;
  height: 40px;
  border-radius: 50%;
  background: #fff;
}

.marquee {
  display: flex;
  flex-direction: column;
  gap: 16px;
  margin-top: 24px;
}

.row {
  display: flex;
  gap: 16.4px;
}

.row .chip {
  background: #e2ecf9;
  border-color: #bfdbfe;
  color: #1d4ed8;
}

.row .chip .tool {
  width: 32px;
  height: 32px;
  margin: 0 0 0 9.4px;
  color: #292524;
}
```
